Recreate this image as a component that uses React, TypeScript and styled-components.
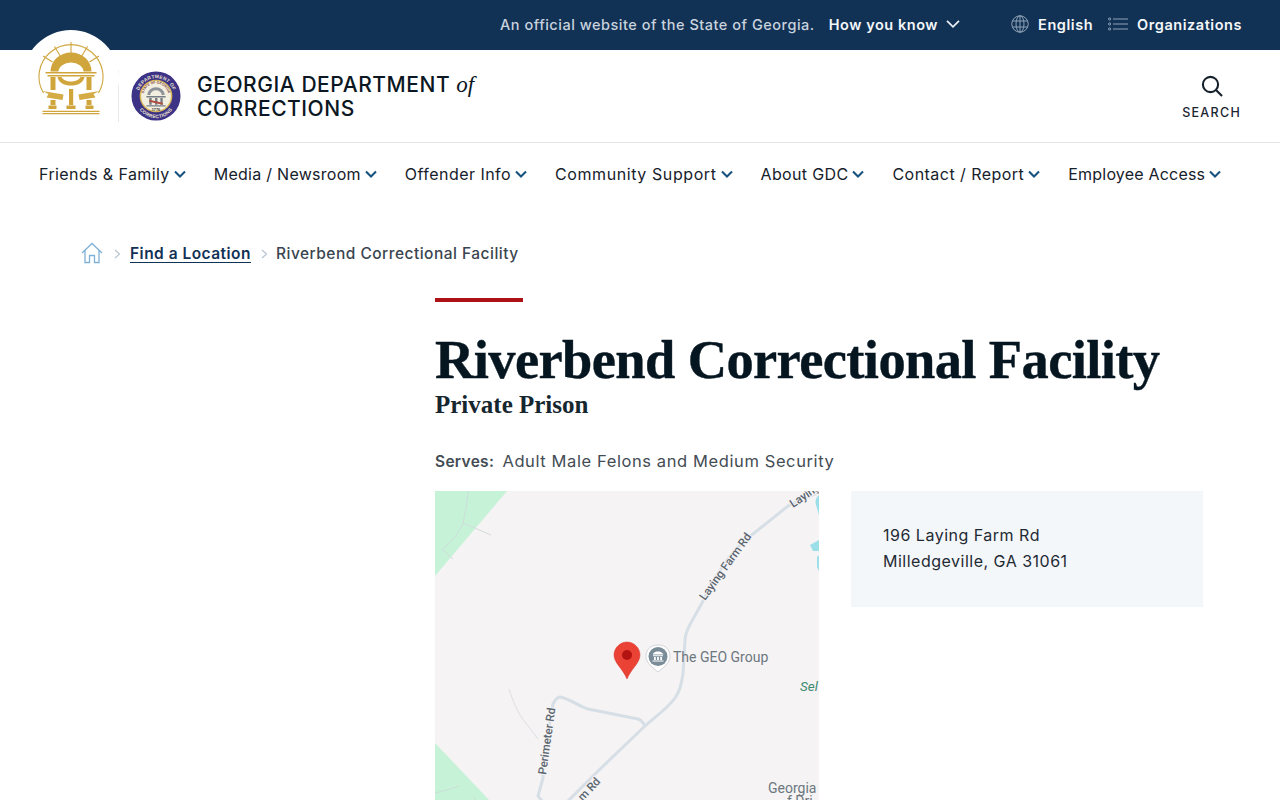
import React from "react";
import styled, { createGlobalStyle } from "styled-components";

const Global = createGlobalStyle`
  html, body { margin: 0; padding: 0; background: #fff; overflow: hidden; height: 800px; }
  body { font-family: "Inter", "Open Sans", sans-serif; color: #0b1a26; }
  * { box-sizing: border-box; }
`;

const Page = styled.div`
  width: 1280px;
  height: 800px;
  overflow: hidden;
  position: relative;
`;

const TopBar = styled.div`
  height: 50px;
  background: #113155;
  display: flex;
  align-items: center;
  justify-content: flex-end;
  padding: 0 38px 2px 0;
  color: #fff;
  font-size: 14.5px;
`;

const Official = styled.span`
  color: #c9d3de;
  font-weight: 500;
  letter-spacing: 0.51px;
  margin-right: 14px;
`;

const TopLink = styled.span<{ $mr?: number }>`
  display: inline-flex;
  align-items: center;
  font-weight: 600;
  letter-spacing: 0.55px;
  color: #f4f7fa;
  margin-right: ${(p) => p.$mr ?? 0}px;
`;

const TopIcon = styled.svg`
  display: block;
  margin-right: 9px;
`;

const Header = styled.header`
  height: 93px;
  border-bottom: 1px solid #e3e5e8;
  display: flex;
  align-items: center;
  justify-content: space-between;
  padding: 0 39px 0 118px;
`;

const SealBadge = styled.div`
  position: absolute;
  left: 23px;
  top: 30px;
  width: 96px;
  height: 96px;
  border-radius: 50%;
  background: #fff;
  display: flex;
  align-items: flex-start;
  justify-content: center;
  padding-top: 11px;
`;

const Brand = styled.div`
  display: flex;
  align-items: center;
  height: 52px;
  border-left: 1px solid #e8e8e6;
  padding-left: 12px;
  margin-top: -1px;
`;

const BrandName = styled.div`
  margin-left: 16px;
  font-size: 21px;
  line-height: 24px;
  font-weight: 500;
  letter-spacing: 0.55px;
  color: #0b1722;
  padding-top: 2px;
  em {
    font-family: "Liberation Serif", serif;
    font-style: italic;
    font-size: 23px;
    letter-spacing: 0;
    font-weight: 400;
  }
`;

const SearchBox = styled.div`
  display: flex;
  flex-direction: column;
  align-items: center;
  font-size: 12.5px;
  font-weight: 500;
  letter-spacing: 1.3px;
  color: #1a2530;
  gap: 7px;
  margin-top: 2px;
`;

const Nav = styled.nav`
  height: 62px;
  display: flex;
  align-items: center;
  gap: 27px;
  padding: 0 0 0 39px;
`;

const NavItem = styled.a<{ $track: number }>`
  display: inline-flex;
  align-items: center;
  gap: 3px;
  font-size: 16px;
  letter-spacing: ${(p) => p.$track}px;
  color: #16212b;
  font-weight: 400;
`;

const Crumbs = styled.div`
  display: flex;
  align-items: center;
  height: 24px;
  margin: 36px 0 0 81px;
  font-size: 15.5px;
  font-weight: 500;
  letter-spacing: 0.48px;
  color: #3a4550;
`;

const CrumbLink = styled.a`
  color: #113155;
  font-weight: 600;
  text-decoration: underline;
  text-underline-offset: 3px;
  text-decoration-thickness: 1px;
`;

const CrumbSep = styled.svg<{ $ml: number; $mr: number }>`
  display: block;
  margin: 2px ${(p) => p.$mr}px 0 ${(p) => p.$ml}px;
`;

const Main = styled.main`
  margin: 33px 0 0 435px;
  width: 768px;
`;

const RedRule = styled.div`
  width: 88px;
  height: 4px;
  background: #ad1217;
`;

const Title = styled.h1`
  margin: 26px 0 0;
  font-family: "Liberation Serif", serif;
  font-size: 54.5px;
  line-height: 64px;
  font-weight: 700;
  letter-spacing: -0.62px;
  -webkit-text-stroke: 0.4px #061621;
  color: #061621;
  white-space: nowrap;
`;

const Subtitle = styled.h2`
  margin: 0;
  font-family: "Liberation Serif", serif;
  font-size: 25px;
  line-height: 26px;
  font-weight: 700;
  color: #16262f;
`;

const Serves = styled.p`
  margin: 31px 0 0;
  font-size: 16.5px;
  line-height: 24px;
  letter-spacing: 0.6px;
  color: #444c54;
  b {
    font-size: 15.5px;
    font-weight: 600;
    margin-right: 3px;
    letter-spacing: 0.3px;
  }
`;

const Columns = styled.div`
  display: flex;
  gap: 32px;
  margin-top: 17px;
  align-items: flex-start;
`;

const MapFrame = styled.div`
  width: 384px;
  height: 310px;
  background: #f5f3f4;
  flex: none;
`;

const MapSvg = styled.svg`
  display: block;
`;

const AddressCard = styled.address`
  flex: 1;
  height: 116px;
  background: #f3f7fa;
  padding: 31px 32px 0;
  font-style: normal;
  font-size: 16px;
  line-height: 26px;
  letter-spacing: 0.5px;
  color: #1f2a33;
`;

const Chevron = () => (
  <svg width="14" height="14" viewBox="0 0 14 14" fill="none">
    <path d="M2 4.6l5 5 5-5" stroke="#17527f" strokeWidth="2.1" />
  </svg>
);

const navItems = [
  { label: "Friends & Family", track: 0.4 },
  { label: "Media / Newsroom", track: 0.27 },
  { label: "Offender Info", track: 0.46 },
  { label: "Community Support", track: 0.58 },
  { label: "About GDC", track: 0.35 },
  { label: "Contact / Report", track: 0.46 },
  { label: "Employee Access", track: 0.2 },
];

const Crest = () => (
  <svg width="66" height="76" viewBox="37.5 41 66 76" fill="none">
    <g stroke="#cfa63f" strokeWidth="1.1">
      <path d="M43 93A32 32 0 1 1 98 93" />
      <path d="M70.5 42V53M54 46.5L60 56.5M87 46.5L81 56.5M42.5 56L52 62M98.5 56L89 62" />
    </g>
    <path d="M50 71.5A20.5 19 0 0 1 91 71.5H83A12.5 9 0 0 0 58 71.5Z" fill="#d0a63c" />
    <path d="M45 72H96V73.6H45ZM47 75H94V76.6H47Z" fill="#d0a63c" />
    <path d="M57 77H84C83 83 77 85.5 70.5 85.5C64 85.5 58 83 57 77Z" fill="#d0a63c" />
    <path d="M61 77H80C78 80.5 74 81.5 70.5 81.5C67 81.5 63 80.5 61 77Z" fill="#fff" />
    <path d="M50 77H55V90H50ZM86 77H91V90H86ZM68.5 89H72.7V105H68.5Z" fill="#d0a63c" />
    <path d="M42 91L63 94.5 62 100 46 97.5 48 94ZM99 91L78 94.5 79 100 95 97.5 93 94Z" fill="#d4ab45" />
    <path d="M50 100H55V105H50ZM86 100H91V105H86Z" fill="#d0a63c" />
    <path d="M48 105.5H56V109H48ZM66 105.5H75V109H66ZM85 105.5H93V109H85Z" fill="#d0a63c" />
    <path d="M42 110.8H99V112H42ZM42 113H99V114.2H42Z" fill="#d0a63c" />
  </svg>
);

const DeptSeal = () => (
  <svg width="50" height="50" viewBox="0 0 52 52">
    <defs>
      <path id="sealTop" d="M7.5 26a18.5 18.5 0 0 1 37 0" />
      <path id="sealBottom" d="M5 28a21 21 0 0 0 42 0" />
      <path id="sealInner" d="M13 26a13 13 0 0 1 26 0" />
    </defs>
    <circle cx="26" cy="26" r="25.5" fill="#3d3386" />
    <circle cx="26" cy="26" r="17" fill="#d8b75a" />
    <circle cx="26" cy="26" r="15.5" fill="#f3efe0" />
    <text fontSize="5" fontFamily="Liberation Sans" fontWeight="700" fill="#efe9d2" letterSpacing="0.25">
      <textPath href="#sealTop" startOffset="50%" textAnchor="middle">DEPARTMENT OF</textPath>
    </text>
    <text fontSize="5" fontFamily="Liberation Sans" fontWeight="700" fill="#efe9d2" letterSpacing="0.25">
      <textPath href="#sealBottom" startOffset="50%" textAnchor="middle">CORRECTIONS</textPath>
    </text>
    <text fontSize="3.6" fontFamily="Liberation Sans" fontWeight="700" fill="#7b3b35">
      <textPath href="#sealInner" startOffset="50%" textAnchor="middle">STATE OF GEORGIA</textPath>
    </text>
    <path d="M17 25A9 8 0 0 1 35 25H32A6 5 0 0 0 20 25Z" fill="#8c9298" />
    <path d="M16 26H36V27.5H16ZM19 28H21.5V35H19ZM25 28H27.5V35H25ZM30.5 28H33V35H30.5ZM16 35.5H36V37H16Z" fill="#777e85" />
    <path d="M19 30l14 3v2L19 32Z" fill="#b04c40" />
    <text x="26" y="41.5" textAnchor="middle" fontSize="4" fontWeight="700" fontFamily="Liberation Sans" fill="#333">1776</text>
  </svg>
);

const MapArt = () => (
  <MapSvg width="384" height="310" viewBox="0 0 384 310" fill="none">
    <path d="M0 0H72L0 85Z" fill="#c6f2d8" />
    <path d="M0 252L55 310H0Z" fill="#c6f2d8" />
    <path d="M33 0C32 12 30 24 28 32C24 42 16 52 7 58M7 58L18 68" stroke="#cdddd8" strokeWidth="1" />
    <path d="M28 32L56 44" stroke="#d3dcd9" strokeWidth="1" />
    <path d="M0 302C8 300 16 298 24 295M38 306L42 310" stroke="#cdddd8" strokeWidth="1" />
    <path d="M384 1L353 15 L313 47 C292 64 279 88 267 112 C257 130 250 140 250 150 L248 183 C246 194 245 200 240 207 C232 218 220 226 210 235 L163 280 L133 310" stroke="#d6dee6" strokeWidth="3" />
    <path d="M210 235C208 231 206 229 203 228L153 218C142 214 135 208 125 206C122 206 120 209 118 213L108 270L108 287L103 305L107 310" stroke="#d6dee6" strokeWidth="3" />
    <path d="M74 198C78 210 82 220 87 227L103 248" stroke="#dcdfe3" strokeWidth="1" />
    <path d="M381 14C379 8 384 4 384 4V24Z" fill="#9ddfe9" />
    <path d="M375 54L384 49V60L378 60ZM382 66L384 64V80L382 76Z" fill="#9ddfe9" />
    <g fontFamily="Roboto, sans-serif" fontSize="11.5" fontWeight="500" fill="#5b6670" stroke="#f5f3f4" strokeWidth="2" paintOrder="stroke">
      <text transform="translate(270 110) rotate(-54)">Laying Farm Rd</text>
      <text transform="translate(358 17) rotate(-34)">Laying</text>
      <text transform="translate(111 284) rotate(-82)">Perimeter Rd</text>
      <text transform="translate(166 291) rotate(-47)" textAnchor="end">m Rd</text>
    </g>
    <text x="238" y="171" fontFamily="Roboto, sans-serif" fontSize="14" fill="#6d7780">The GEO Group</text>
    <text x="365" y="200" fontFamily="Roboto, sans-serif" fontSize="13.5" fontStyle="italic" fill="#3e8b6f">Sel</text>
    <text x="333" y="302" fontFamily="Roboto, sans-serif" fontSize="14" fill="#6d7780">Georgia</text>
    <text x="352" y="315" fontFamily="Roboto, sans-serif" fontSize="14" fill="#6d7780">f Dri</text>
    <path d="M223 154C231 154 235 159 235 165.500C235 172 228 177 223 181C218 177 211 172 211 165.500C211 159 215 154 223 154Z" fill="#fff" stroke="#d2d6da" />
    <circle cx="223" cy="165.500" r="9.500" fill="#7b8c99" />
    <path d="M217.500 163.500C219 161 221 160.500 223 160.500C225 160.500 227 161 228.500 163.500ZM218 164.300H228V165.200H218ZM219 166H220.800V169H219ZM222.100 166H223.900V169H222.100ZM225.200 166H227V169H225.200ZM217.500 169.500H228.500V170.500H217.500Z" fill="#fff" />
    <path d="M192 151C199 151 205 157 205 164C205 172 196 178 192 188C188 178 179 172 179 164C179 157 185 151 192 151Z" fill="#ea4335" stroke="#d8332b" strokeWidth=".5" />
    <circle cx="192" cy="164" r="5" fill="#b31412" />
  </MapSvg>
);

export default function App() {
  return (
    <Page>
      <Global />
      <TopBar>
        <Official>An official website of the State of Georgia.</Official>
        <TopLink $mr={50}>
          How you know
          <svg width="16" height="10" viewBox="0 0 16 10" fill="none" style={{ marginLeft: 7 }}>
            <path d="M2 1.8l6 6 6-6" stroke="#e8edf2" strokeWidth="1.8" />
          </svg>
        </TopLink>
        <TopLink $mr={15}>
          <TopIcon width="18" height="18" viewBox="0 0 18 18" fill="none" stroke="#8fa3b8" strokeWidth="1">
            <circle cx="9" cy="9" r="8.2" />
            <ellipse cx="9" cy="9" rx="4" ry="8.2" />
            <path d="M9 .8V17.2M1.3 6H16.7M1.3 12H16.7" />
          </TopIcon>
          English
        </TopLink>
        <TopLink>
          <TopIcon width="20" height="14" viewBox="0 0 20 14" fill="none" stroke="#8fa3b8" strokeWidth="1">
            <path d="M5 2H20M5 7H20M5 12H20" />
            <circle cx="1.6" cy="2" r="1.1" />
            <circle cx="1.6" cy="7" r="1.1" />
            <circle cx="1.6" cy="12" r="1.1" />
          </TopIcon>
          Organizations
        </TopLink>
      </TopBar>

      <SealBadge>
        <Crest />
      </SealBadge>

      <Header>
        <Brand>
          <DeptSeal />
          <BrandName>
            GEORGIA DEPARTMENT <em>of</em>
            <br />
            CORRECTIONS
          </BrandName>
        </Brand>
        <SearchBox>
          <svg width="24" height="24" viewBox="0 0 24 24" fill="none" stroke="#15202b" strokeWidth="2.1">
            <circle cx="10.5" cy="10.5" r="7.6" />
            <path d="M16 16l6 6" />
          </svg>
          SEARCH
        </SearchBox>
      </Header>

      <Nav>
        {navItems.map((n) => (
          <NavItem key={n.label} $track={n.track}>
            {n.label}
            <Chevron />
          </NavItem>
        ))}
      </Nav>

      <Crumbs>
        <svg width="22" height="22" viewBox="0 0 22 22" fill="none" stroke="#7fb0d6" strokeWidth="1.3">
          <path d="M1 11L11 1.5 21 11M4 8.5V20.5H8.5V13.500H13.500V20.500H18V8.500" />
        </svg>
        <CrumbSep $ml={11} $mr={9} width="7" height="10" viewBox="0 0 7 10" fill="none" stroke="#b4c2cf" strokeWidth="1.1">
          <path d="M1 1l4.5 4-4.5 4" />
        </CrumbSep>
        <CrumbLink>Find a Location</CrumbLink>
        <CrumbSep $ml={10} $mr={8} width="7" height="10" viewBox="0 0 7 10" fill="none" stroke="#b4c2cf" strokeWidth="1.1">
          <path d="M1 1l4.5 4-4.5 4" />
        </CrumbSep>
        Riverbend Correctional Facility
      </Crumbs>

      <Main>
        <RedRule />
        <Title>Riverbend Correctional Facility</Title>
        <Subtitle>Private Prison</Subtitle>
        <Serves>
          <b>Serves:</b> Adult Male Felons and Medium Security
        </Serves>
        <Columns>
          <MapFrame>
            <MapArt />
          </MapFrame>
          <AddressCard>
            196 Laying Farm Rd
            <br />
            Milledgeville, GA 31061
          </AddressCard>
        </Columns>
      </Main>
    </Page>
  );
}
